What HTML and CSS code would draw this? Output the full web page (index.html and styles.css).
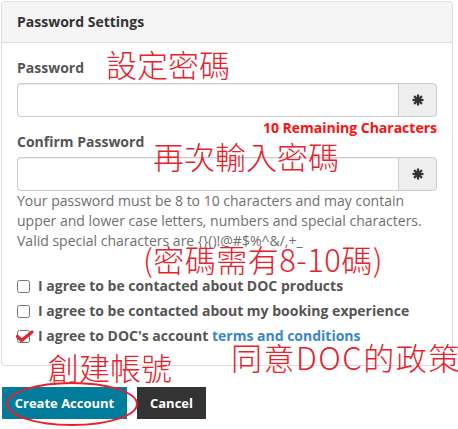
FILE: index.html
```html
<!DOCTYPE html>
<html lang="en">
<head>
<meta charset="utf-8">
<title>Password Settings</title>
<link rel="stylesheet" href="styles.css">
</head>
<body>
<div class="page">
  <div class="panel">
    <div class="panel-heading">Password Settings</div>
    <div class="panel-body">
      <div class="form-group">
        <label class="field-label">Password</label>
        <div class="input-group">
          <input type="password" class="form-control">
          <span class="addon">
            <svg width="12" height="12" viewBox="0 0 12 12"><g stroke="#333" stroke-width="2.2" stroke-linecap="butt"><line x1="6" y1="0.5" x2="6" y2="11.5"/><line x1="0.5" y1="6" x2="11.5" y2="6"/><line x1="2.1" y1="2.1" x2="9.9" y2="9.9"/><line x1="9.9" y1="2.1" x2="2.1" y2="9.9"/></g></svg>
          </span>
        </div>
      </div>
      <div class="form-group confirm">
        <div class="label-row">
          <label class="field-label">Confirm Password</label>
          <span class="remaining">10 Remaining Characters</span>
        </div>
        <div class="input-group">
          <input type="password" class="form-control">
          <span class="addon">
            <svg width="12" height="12" viewBox="0 0 12 12"><g stroke="#333" stroke-width="2.2" stroke-linecap="butt"><line x1="6" y1="0.5" x2="6" y2="11.5"/><line x1="0.5" y1="6" x2="11.5" y2="6"/><line x1="2.1" y1="2.1" x2="9.9" y2="9.9"/><line x1="9.9" y1="2.1" x2="2.1" y2="9.9"/></g></svg>
          </span>
        </div>
        <p class="help">Your password must be 8 to 10 characters and may contain upper and lower case letters, numbers and special characters. Valid special characters are {}()!@#$%^&amp;/,+_</p>
      </div>
      <div class="checks">
        <label class="check"><input type="checkbox"><span>I agree to be contacted about DOC products</span></label>
        <label class="check"><input type="checkbox"><span>I agree to be contacted about my booking experience</span></label>
        <label class="check"><input type="checkbox"><span>I agree to DOC's account <a href="#" class="link">terms and conditions</a></span></label>
      </div>
    </div>
  </div>
  <div class="actions">
    <button class="btn btn-primary" type="button">Create Account</button>
    <button class="btn btn-dark" type="button">Cancel</button>
  </div>

  <div class="note note-1">設定密碼</div>
  <div class="note note-2">再次輸入密碼</div>
  <div class="note note-3">(密碼需有8-10碼)</div>
  <div class="note note-4">創建帳號</div>
  <div class="note note-5">同意DOC的政策</div>
  <svg class="tick" width="18" height="14" viewBox="0 0 18 14"><path d="M1.5 6.5 L5.5 10.5 L16 2" fill="none" stroke="#e8212b" stroke-width="3.2" stroke-linecap="round" stroke-linejoin="round"/></svg>
  <svg class="ring" width="136" height="48" viewBox="0 0 136 48"><ellipse cx="68" cy="24" rx="65" ry="21" fill="none" stroke="#e8212b" stroke-width="2"/></svg>
</div>
</body>
</html>
```

FILE: styles.css
```css
* { box-sizing: border-box; }
html, body { margin: 0; padding: 0; background: #fff; }
body {
  font-family: "Open Sans", "Liberation Sans", sans-serif;
  font-size: 14px;
  line-height: 20px;
  color: #333;
}
.page {
  position: relative;
  width: 458px;
  height: 429px;
  padding: 1px 5px 0 1px;
  overflow: hidden;
}
.panel {
  width: 452px;
  border: 1px solid #ddd;
  border-radius: 4px;
  background: #fff;
}
.panel-heading {
  background: #f5f5f5;
  border-bottom: 1px solid #ddd;
  padding: 10px 15px;
  font-weight: 700;
  color: #333;
  border-radius: 3px 3px 0 0;
}
.panel-body {
  padding: 15px 15px 19px;
}
.form-group { margin-bottom: 15px; }
.form-group.confirm { margin-bottom: 0; }
.field-label {
  display: block;
  font-weight: 700;
  color: #555;
  margin-bottom: 5px;
}
.label-row {
  display: flex;
  justify-content: space-between;
  align-items: flex-start;
}
.remaining {
  color: #ff1010;
  font-weight: 700;
  font-size: 14px;
  line-height: 16px;
  margin-top: -12px;
}
.input-group { display: flex; height: 34px; }
.form-control {
  flex: 1;
  min-width: 0;
  height: 34px;
  border: 1px solid #ccc;
  border-right: 0;
  border-radius: 4px 0 0 4px;
  box-shadow: inset 0 1px 1px rgba(0,0,0,.075);
  padding: 6px 12px;
  font: inherit;
}
.addon {
  width: 39px;
  border: 1px solid #ccc;
  border-radius: 0 4px 4px 0;
  background: #eee;
  display: flex;
  align-items: center;
  justify-content: center;
}
.help {
  margin: 0;
  color: #6f6f6f;
}
.checks {
  margin-top: 25px;
  display: flex;
  flex-direction: column;
  gap: 5px;
}
.check {
  display: flex;
  align-items: center;
  height: 20px;
  font-weight: 700;
  color: #555;
}
.check input {
  width: 13px;
  height: 13px;
  margin: 0 8px 0 0;
}
.link { color: #3a86c8; text-decoration: none; }
.actions {
  display: flex;
  gap: 10px;
  margin: 21px 0 0 1px;
}
.btn {
  height: 32px;
  border: 0;
  border-radius: 0;
  font: inherit;
  font-size: 13px;
  font-weight: 700;
  color: #fff;
  padding: 0;
}
.btn-primary { width: 125px; background: #007c9c; }
.btn-dark { width: 69px; background: #333; }
.note {
  position: absolute;
  font-family: "Noto Sans CJK TC", "Noto Sans CJK SC", sans-serif;
  font-size: 31px;
  font-weight: 300;
  line-height: 31px;
  color: #e8212b;
  white-space: nowrap;
}
.note-1 { left: 106px; top: 48px; }
.note-2 { left: 153px; top: 140px; }
.note-3 { left: 143px; top: 243px; letter-spacing: 0.5px; }
.note-4 { left: 48px; top: 351px; }
.note-5 { left: 231px; top: 341px; letter-spacing: 1.5px; }
.tick { position: absolute; left: 16px; top: 330px; }
.ring { position: absolute; left: 4px; top: 380px; }
```
